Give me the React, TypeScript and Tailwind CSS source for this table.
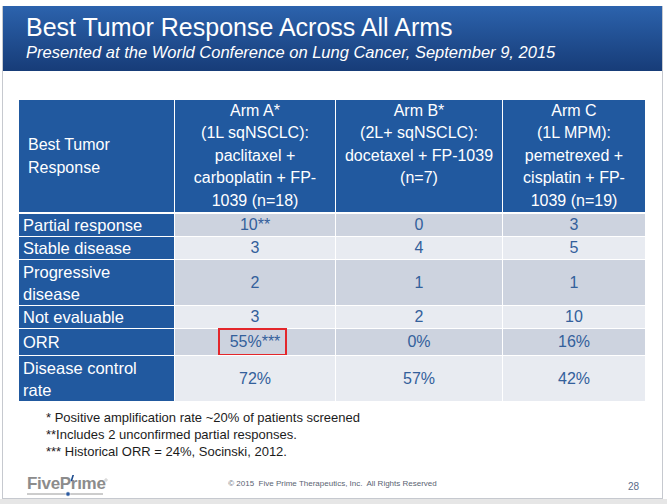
import React from 'react';

type Row = {
  label: React.ReactNode;
  vals: string[];
  h: string;
  dark: boolean;
  first?: boolean;
};

const rows: Row[] = [
  { label: 'Partial response', vals: ['10**', '0', '3'], h: 'h-[24px]', dark: true, first: true },
  { label: 'Stable disease', vals: ['3', '4', '5'], h: 'h-[23px]', dark: false },
  { label: <>Progressive<br />disease</>, vals: ['2', '1', '1'], h: 'h-[46px]', dark: true },
  { label: 'Not evaluable', vals: ['3', '2', '10'], h: 'h-[23px]', dark: false },
  { label: 'ORR', vals: ['55%***', '0%', '16%'], h: 'h-[27px]', dark: true },
  { label: <>Disease control<br />rate</>, vals: ['72%', '57%', '42%'], h: 'h-[46px]', dark: false },
];

function Logo() {
  return (
    <div className="relative w-[86px] h-[24px]">
      <span className="block text-[17px] leading-[17px] font-bold tracking-[-0.3px] text-[#8c8c8c]">
        FivePrıme
      </span>
      <svg className="absolute left-0 top-0" width="86" height="24" viewBox="0 0 86 24">
        {/* accent over the i */}
        <path d="M44.5 5.5 L46.5 -1" stroke="#1f4d8f" strokeWidth="1.6" strokeLinecap="round" />
        {/* underline */}
        <line x1="0" y1="19" x2="76" y2="19" stroke="#9a9a9a" strokeWidth="1" />
        <circle cx="41" cy="19" r="2.2" fill="#2a5aa0" stroke="#ffffff" strokeWidth="0.6" />
        {/* registered mark */}
        <circle cx="79" cy="5" r="1.2" fill="none" stroke="#9a9a9a" strokeWidth="0.5" />
      </svg>
    </div>
  );
}

export default function App() {
  return (
    <div className="w-[667px] h-[504px] bg-white flex flex-col overflow-hidden font-['Liberation_Sans',Arial,sans-serif]">
      <div className="ml-[2px] mt-[6px] w-[661px] h-[493px] border-l border-r border-b border-[#c6c9cf] flex flex-col">
        {/* Title banner */}
        <div className="h-[65px] shrink-0 bg-linear-to-b from-[#2c63ad] to-[#173c78] pl-[23px] pt-[7px] text-white">
          <div className="text-[25px] leading-[28px]">Best Tumor Response Across All Arms</div>
          <div className="text-[16.5px] leading-[20px] italic mt-[1px]">
            Presented at the World Conference on Lung Cancer, September 9, 2015
          </div>
        </div>

        {/* Table */}
        <div className="mt-[29px] ml-[16px] w-[626px] grid grid-cols-[155px_161px_167px_143px]">
          <div className="h-[112px] bg-[#21599f] text-white text-[16px] leading-[23px] pl-[9px] flex items-center">
            <span>Best Tumor<br />Response</span>
          </div>
          <div className="h-[112px] bg-[#21599f] text-white text-[16px] leading-[22.4px] text-center border-l border-white whitespace-nowrap">
            Arm A*<br />(1L sqNSCLC):<br />paclitaxel +<br />carboplatin + FP-<br />1039 (n=18)
          </div>
          <div className="h-[112px] bg-[#21599f] text-white text-[16px] leading-[22.4px] text-center border-l border-white whitespace-nowrap">
            Arm B*<br />(2L+ sqNSCLC):<br />docetaxel + FP-1039<br />(n=7)
          </div>
          <div className="h-[112px] bg-[#21599f] text-white text-[16px] leading-[22.4px] text-center border-l border-white whitespace-nowrap">
            Arm C<br />(1L MPM):<br />pemetrexed +<br />cisplatin + FP-<br />1039 (n=19)
          </div>

          {rows.map((r, i) => (
            <React.Fragment key={i}>
              <div
                className={`${r.h} ${r.first ? 'border-t-2' : 'border-t'} border-white bg-[#21599f] text-white text-[16.5px] leading-[22px] pl-[4px] flex items-center`}
              >
                <span>{r.label}</span>
              </div>
              {r.vals.map((v, j) => (
                <div
                  key={j}
                  className={`${r.h} ${r.first ? 'border-t-2' : 'border-t'} border-l border-white ${r.dark ? 'bg-[#cdd3df]' : 'bg-[#e8ebf1]'} text-[#33609b] text-[16px] leading-[20px] flex items-center justify-center relative`}
                >
                  {v}
                  {r.label === 'ORR' && j === 0 && (
                    <span className="absolute left-[43px] top-[-1px] w-[69px] h-[28px] border-2 border-[#e3262b]" />
                  )}
                </div>
              ))}
            </React.Fragment>
          ))}
        </div>

        {/* Footnotes */}
        <div className="mt-[8px] pl-[43px] text-[13px] leading-[17px] text-[#1c1c1c]">
          <div>* Positive amplification rate ~20% of patients screened</div>
          <div>**Includes 2 unconfirmed partial responses.</div>
          <div>*** Historical ORR = 24%, Socinski, 2012.</div>
        </div>

        {/* Footer */}
        <div className="mt-auto h-[30px] grid grid-cols-[1fr_auto_1fr] items-start">
          <div className="pl-[24px] pt-[7px]">
            <Logo />
          </div>
          <div className="pt-[11px] text-[8px] leading-[10px] text-[#5a6472]">
            © 2015&nbsp; Five Prime Therapeutics, Inc.&nbsp; All Rights Reserved
          </div>
          <div className="pt-[13px] pr-[23px] text-right text-[10px] leading-[12px] text-[#5b6b88]">28</div>
        </div>
      </div>
      <div className="flex-1 bg-[#e6e6e6]" />
    </div>
  );
}
